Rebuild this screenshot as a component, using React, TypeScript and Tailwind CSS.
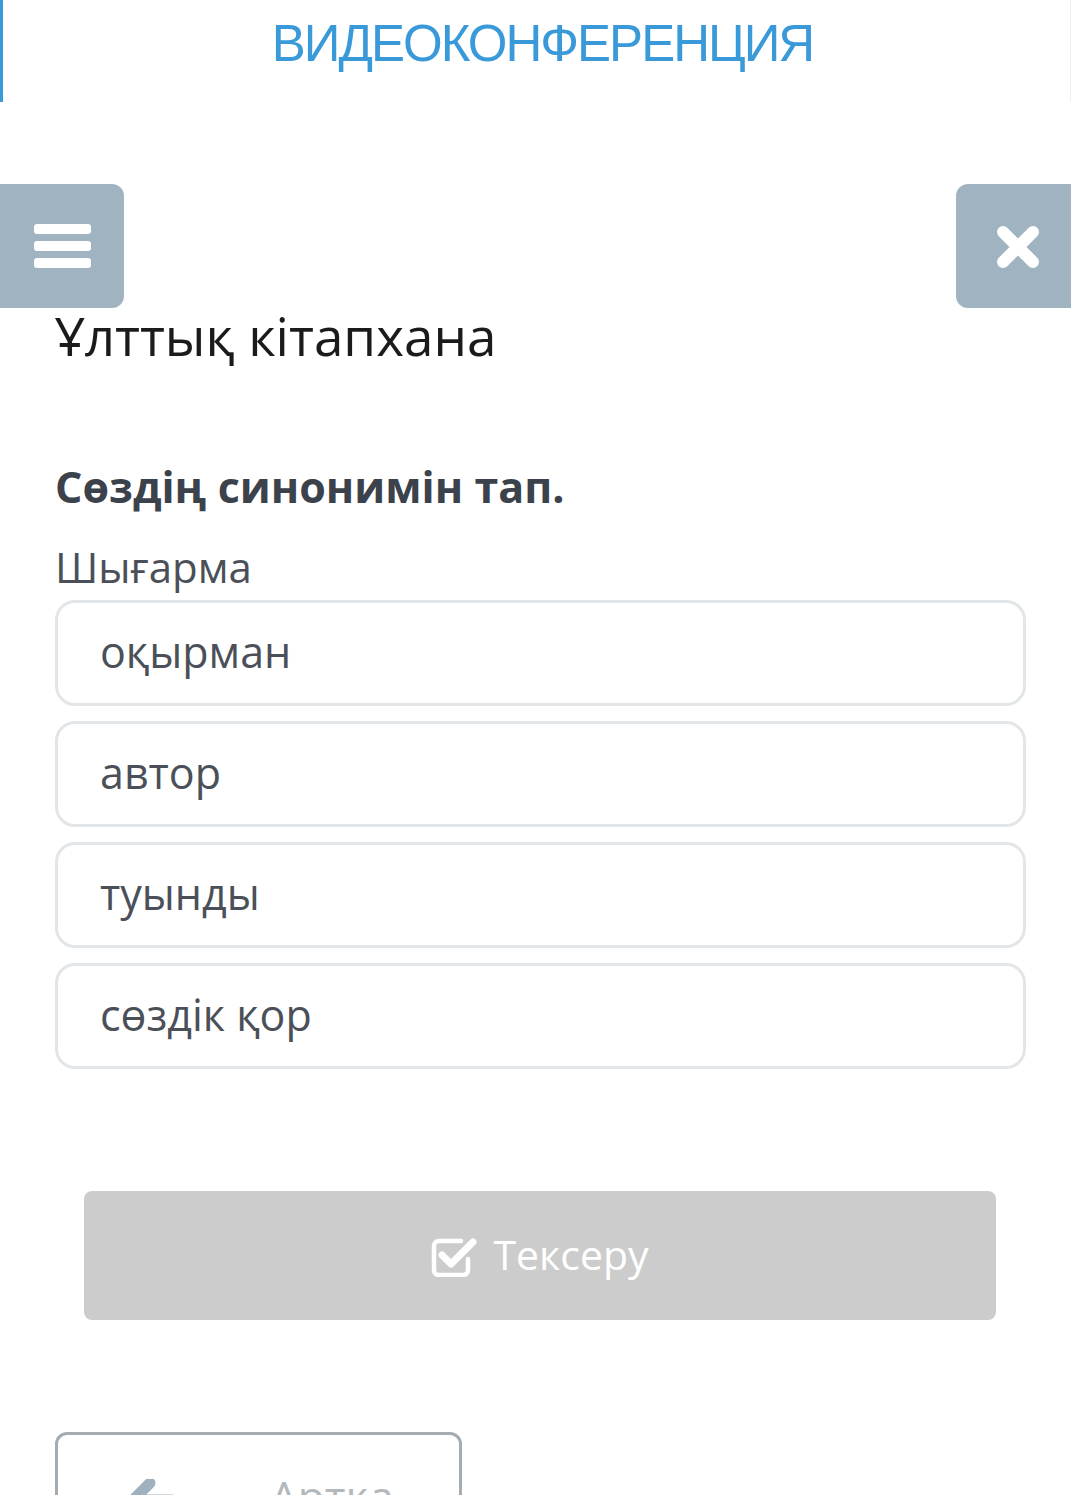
const OPTIONS = ["оқырман", "автор", "туынды", "сөздік қор"];

function CheckSquare() {
  return (
    <svg width="46" height="42" viewBox="0 0 46 42" fill="none">
      <path
        d="M30 6H8a5 5 0 0 0-5 5v24a5 5 0 0 0 5 5h24a5 5 0 0 0 5-5V24"
        stroke="white"
        strokeWidth="4.5"
        strokeLinecap="round"
      />
      <path d="M11 20l9 9L42 7" stroke="white" strokeWidth="7" strokeLinecap="round" strokeLinejoin="round" />
    </svg>
  );
}

export default function App() {
  return (
    <div className="relative w-[1071px] h-[1495px] overflow-hidden bg-white font-['Open_Sans',sans-serif]">
      <div className="flex h-[102px] items-center justify-center border-l-[3px] border-r border-l-[#3a9ad9] border-r-[#eef0f2] pl-3 pb-[16px]">
        <span className="font-['Liberation_Sans',sans-serif] text-[51px] tracking-[-2px] text-[#3a9ad9] leading-none">
          ВИДЕОКОНФЕРЕНЦИЯ
        </span>
      </div>

      <div className="mt-[82px] flex h-[124px] justify-between">
        <div className="flex w-[124px] flex-col items-center justify-center gap-[7px] rounded-r-[12px] bg-[#a0b3c1]">
          <div className="h-[10px] w-[57px] rounded-[3px] bg-white" />
          <div className="h-[10px] w-[57px] rounded-[3px] bg-white" />
          <div className="h-[10px] w-[57px] rounded-[3px] bg-white" />
        </div>
        <div className="flex w-[115px] items-center justify-center rounded-l-[12px] bg-[#a0b3c1] pl-[9px] pt-[2px]">
          <svg width="46" height="46" viewBox="0 0 46 46">
            <path d="M8 8l30 30M38 8L8 38" stroke="white" strokeWidth="12" strokeLinecap="round" />
          </svg>
        </div>
      </div>

      <div className="px-[55px]">
        <h1 className="-mt-[2px] text-[53px] leading-[60px] text-[#1b1b1b]">Ұлттық кітапхана</h1>

        <h2 className="mt-[96px] text-[43px] font-bold leading-[50px] text-[#3c424b]">Сөздің синонимін тап.</h2>
        <p className="mt-[31px] text-[42px] leading-[48px] text-[#4b5058]">Шығарма</p>

        <div className="mt-[9px] flex w-[971px] flex-col gap-[15px]">
          {OPTIONS.map((o) => (
            <div
              key={o}
              className="flex h-[106px] items-center rounded-[20px] border-[3px] border-[#e2e6e8] pl-[42px] pb-[1px] text-[43px] text-[#4b5058]"
            >
              {o}
            </div>
          ))}
        </div>
      </div>

      <div className="mt-[122px] px-[84px]">
        <div className="flex h-[129px] w-[912px] items-center justify-center gap-[16px] rounded-[8px] bg-[#cccccc] text-[41px] text-white">
          <CheckSquare />
          <span className="pb-[2px]">Тексеру</span>
        </div>
      </div>

      <div className="mt-[112px] px-[55px]">
        <div className="flex h-[120px] w-[407px] items-start rounded-[12px] border-[3px] border-[#a5adb2] pt-[36px] pl-[70px]">
          <svg width="48" height="42" viewBox="0 0 48 42" className="mt-[8px]">
            <path d="M22 4L5 21l17 17M6 21h38" stroke="#9fb1bf" strokeWidth="11" strokeLinecap="round" strokeLinejoin="round" fill="none" />
          </svg>
          <span className="ml-[94px] text-[44px] leading-[50px] text-[#b3b8bc]">Артқа</span>
        </div>
      </div>
    </div>
  );
}
